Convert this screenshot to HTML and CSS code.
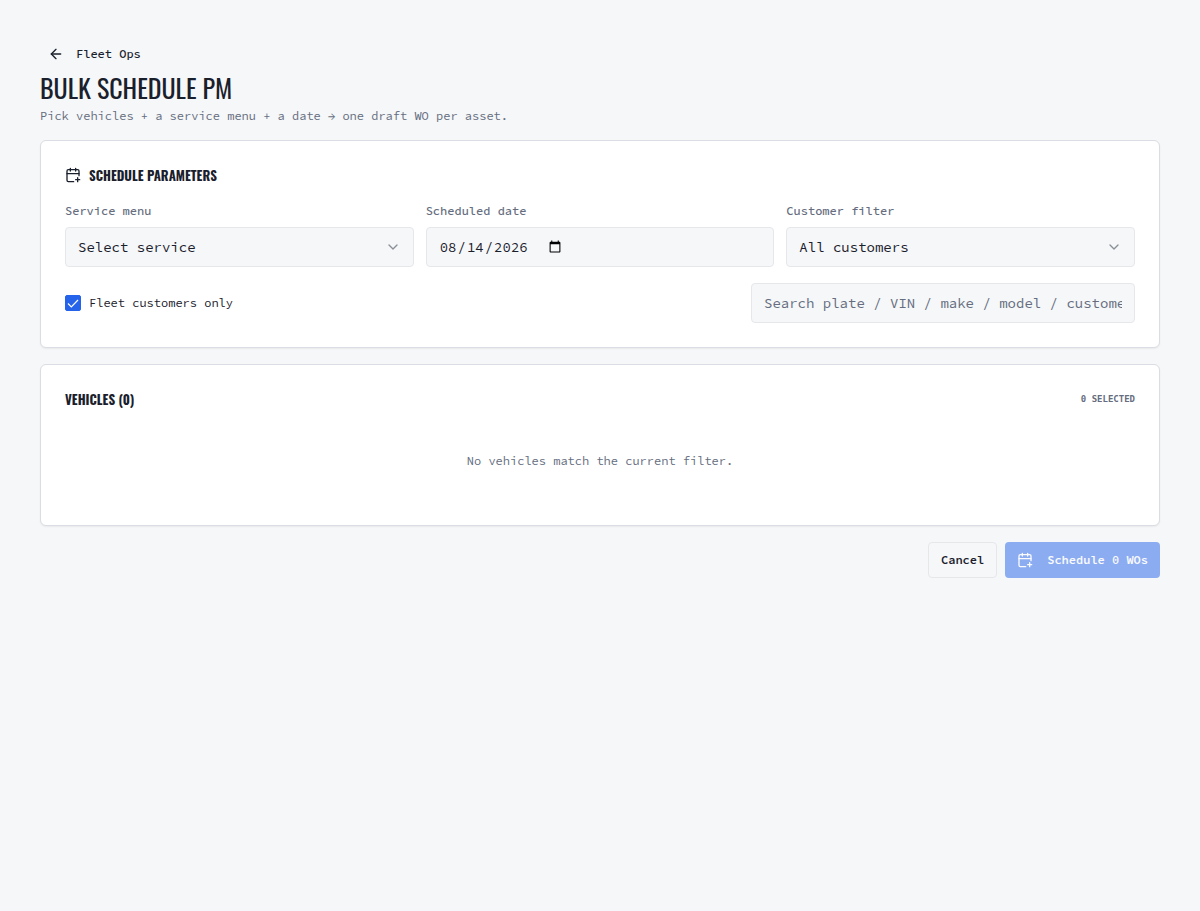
FILE: index.html
```
<!DOCTYPE html>
<html lang="en">
<head>
    <meta charset="UTF-8">
    <meta name="viewport" content="width=device-width, initial-scale=1.0">
    <title>Bulk Schedule PM</title>
    <link rel="stylesheet" href="styles.css">
</head>
<body>
    <main class="page">
        <header class="page-header">
            <a class="back-link" href="#">
                <svg class="icon" viewBox="0 0 24 24"><path d="m12 19-7-7 7-7"/><path d="M19 12H5"/></svg>
                Fleet Ops
            </a>
            <h1>BULK SCHEDULE PM</h1>
            <p class="subtitle">Pick vehicles + a service menu + a date → one draft WO per asset.</p>
        </header>

        <section class="card">
            <h2>
                <svg class="icon" viewBox="0 0 24 24"><path d="M8 2v4M16 2v4M3 10h18"/><path d="M21 13V6a2 2 0 0 0-2-2H5a2 2 0 0 0-2 2v14c0 1.1.9 2 2 2h8"/><path d="M16 19h6M19 16v6"/></svg>
                SCHEDULE PARAMETERS
            </h2>
            <div class="fields">
                <div class="field">
                    <label for="service">Service menu</label>
                    <div class="select">
                        <select id="service" class="control">
                            <option>Select service</option>
                        </select>
                        <svg class="icon" viewBox="0 0 24 24"><path d="m6 9 6 6 6-6"/></svg>
                    </div>
                </div>
                <div class="field">
                    <label for="date">Scheduled date</label>
                    <input type="date" id="date" class="control" value="2026-08-14">
                </div>
                <div class="field">
                    <label for="customer">Customer filter</label>
                    <div class="select">
                        <select id="customer" class="control">
                            <option>All customers</option>
                        </select>
                        <svg class="icon" viewBox="0 0 24 24"><path d="m6 9 6 6 6-6"/></svg>
                    </div>
                </div>
            </div>
            <div class="filters">
                <label class="check" for="fleet-only">
                    <span class="check-box">
                        <input type="checkbox" id="fleet-only" checked>
                        <svg viewBox="0 0 16 16"><path d="M3 8.5l3.3 3.3L13 5"/></svg>
                    </span>
                    Fleet customers only
                </label>
                <input type="text" class="control search" aria-label="Search vehicles" placeholder="Search plate / VIN / make / model / customer">
            </div>
        </section>

        <section class="card">
            <div class="card-header">
                <h2>VEHICLES (0)</h2>
                <span class="count">0 SELECTED</span>
            </div>
            <p class="empty">No vehicles match the current filter.</p>
        </section>

        <div class="actions">
            <button type="button" class="btn">Cancel</button>
            <button type="button" class="btn btn-primary" disabled>
                <svg class="icon" viewBox="0 0 24 24"><path d="M8 2v4M16 2v4M3 10h18"/><path d="M21 13V6a2 2 0 0 0-2-2H5a2 2 0 0 0-2 2v14c0 1.1.9 2 2 2h8"/><path d="M16 19h6M19 16v6"/></svg>
                Schedule 0 WOs
            </button>
        </div>
    </main>
</body>
</html>
```
FILE: styles.css
```
* {
    box-sizing: border-box;
}
body {
    margin: 0;
    background-color: #f5f7f9;
    color: #1a202b;
    font-family: "Source Code Pro", "Liberation Mono", monospace;
    font-size: 12px;
    line-height: 16px;
}
h1, h2, p {
    margin: 0;
}
h1, h2 {
    font-family: Oswald, "Liberation Sans Narrow", "Liberation Sans", sans-serif;
}
.page {
    display: flex;
    flex-direction: column;
    gap: 16px;
    padding: 36px 40px;
}
.icon {
    width: 16px;
    height: 16px;
    flex-shrink: 0;
    fill: none;
    stroke: currentColor;
    stroke-width: 2;
    stroke-linecap: round;
    stroke-linejoin: round;
}

/* Header */
.page-header {
    display: flex;
    flex-direction: column;
    align-items: flex-start;
}
.back-link {
    display: flex;
    align-items: center;
    gap: 12px;
    height: 36px;
    padding: 0 8px;
    color: inherit;
    font-weight: 500;
    text-decoration: none;
}
h1 {
    margin-bottom: 4px;
    font-size: 26px;
    font-weight: 400;
    line-height: 32px;
}
.subtitle {
    color: #656d7e;
}

/* Cards */
.card {
    padding: 24px;
    background-color: #ffffff;
    border: 1px solid #dadde4;
    border-radius: 6px;
    box-shadow: 0 1px 2px rgba(0, 0, 0, 0.06);
}
h2 {
    display: flex;
    align-items: center;
    gap: 8px;
    font-size: 13px;
    font-weight: 700;
    line-height: 20px;
}
.card-header {
    display: flex;
    justify-content: space-between;
    align-items: center;
}
.count {
    color: #656d7e;
    font-family: "DejaVu Sans Mono", monospace;
    font-size: 9px;
    font-weight: 700;
}
.empty {
    margin-top: 16px;
    padding: 28px 0 32px;
    color: #656d7e;
    text-align: center;
}

/* Form */
.fields {
    display: grid;
    grid-template-columns: repeat(3, 1fr);
    gap: 12px;
    margin-top: 16px;
}
.field > label {
    display: block;
    margin-bottom: 6px;
    color: #656d7e;
    font-weight: 500;
    line-height: 20px;
}
.control {
    display: block;
    width: 100%;
    height: 40px;
    padding: 0 12px;
    background-color: #f5f7f9;
    border: 1px solid #e5e7eb;
    border-radius: 4px;
    color: inherit;
    font-family: inherit;
    font-size: 14px;
    appearance: none;
}
input[type="date"] {
    display: flex;
}
input[type="date"]::-webkit-datetime-edit {
    flex: none;
}
.control::placeholder {
    color: #656d7e;
    opacity: 1;
}
.select {
    display: grid;
    align-items: center;
}
.select > * {
    grid-area: 1 / 1;
}
.select .icon {
    justify-self: end;
    margin-right: 13px;
    color: #8b8f96;
    pointer-events: none;
}
.filters {
    display: flex;
    justify-content: space-between;
    align-items: center;
    margin-top: 16px;
}
.check {
    display: flex;
    align-items: center;
    gap: 8px;
}
.check-box {
    display: grid;
}
.check-box > * {
    grid-area: 1 / 1;
    width: 16px;
    height: 16px;
}
.check-box input {
    margin: 0;
    border: 1px solid #2563eb;
    border-radius: 2px;
    appearance: none;
}
.check-box input:checked {
    background-color: #2563eb;
}
.check-box svg {
    fill: none;
    stroke: #ffffff;
    stroke-width: 1.2;
    pointer-events: none;
}
.search {
    max-width: 384px;
}

/* Actions */
.actions {
    display: flex;
    justify-content: flex-end;
    gap: 8px;
}
.btn {
    display: flex;
    align-items: center;
    gap: 14px;
    height: 36px;
    padding: 0 12px;
    background-color: #f5f7f9;
    border: 1px solid #e5e7eb;
    border-radius: 4px;
    color: inherit;
    font-family: inherit;
    font-size: 12px;
    font-weight: 600;
    line-height: 16px;
}
.btn-primary {
    background-color: #2563eb;
    border: none;
    color: #ffffff;
}
.btn-primary:disabled {
    opacity: 0.5;
}
```
